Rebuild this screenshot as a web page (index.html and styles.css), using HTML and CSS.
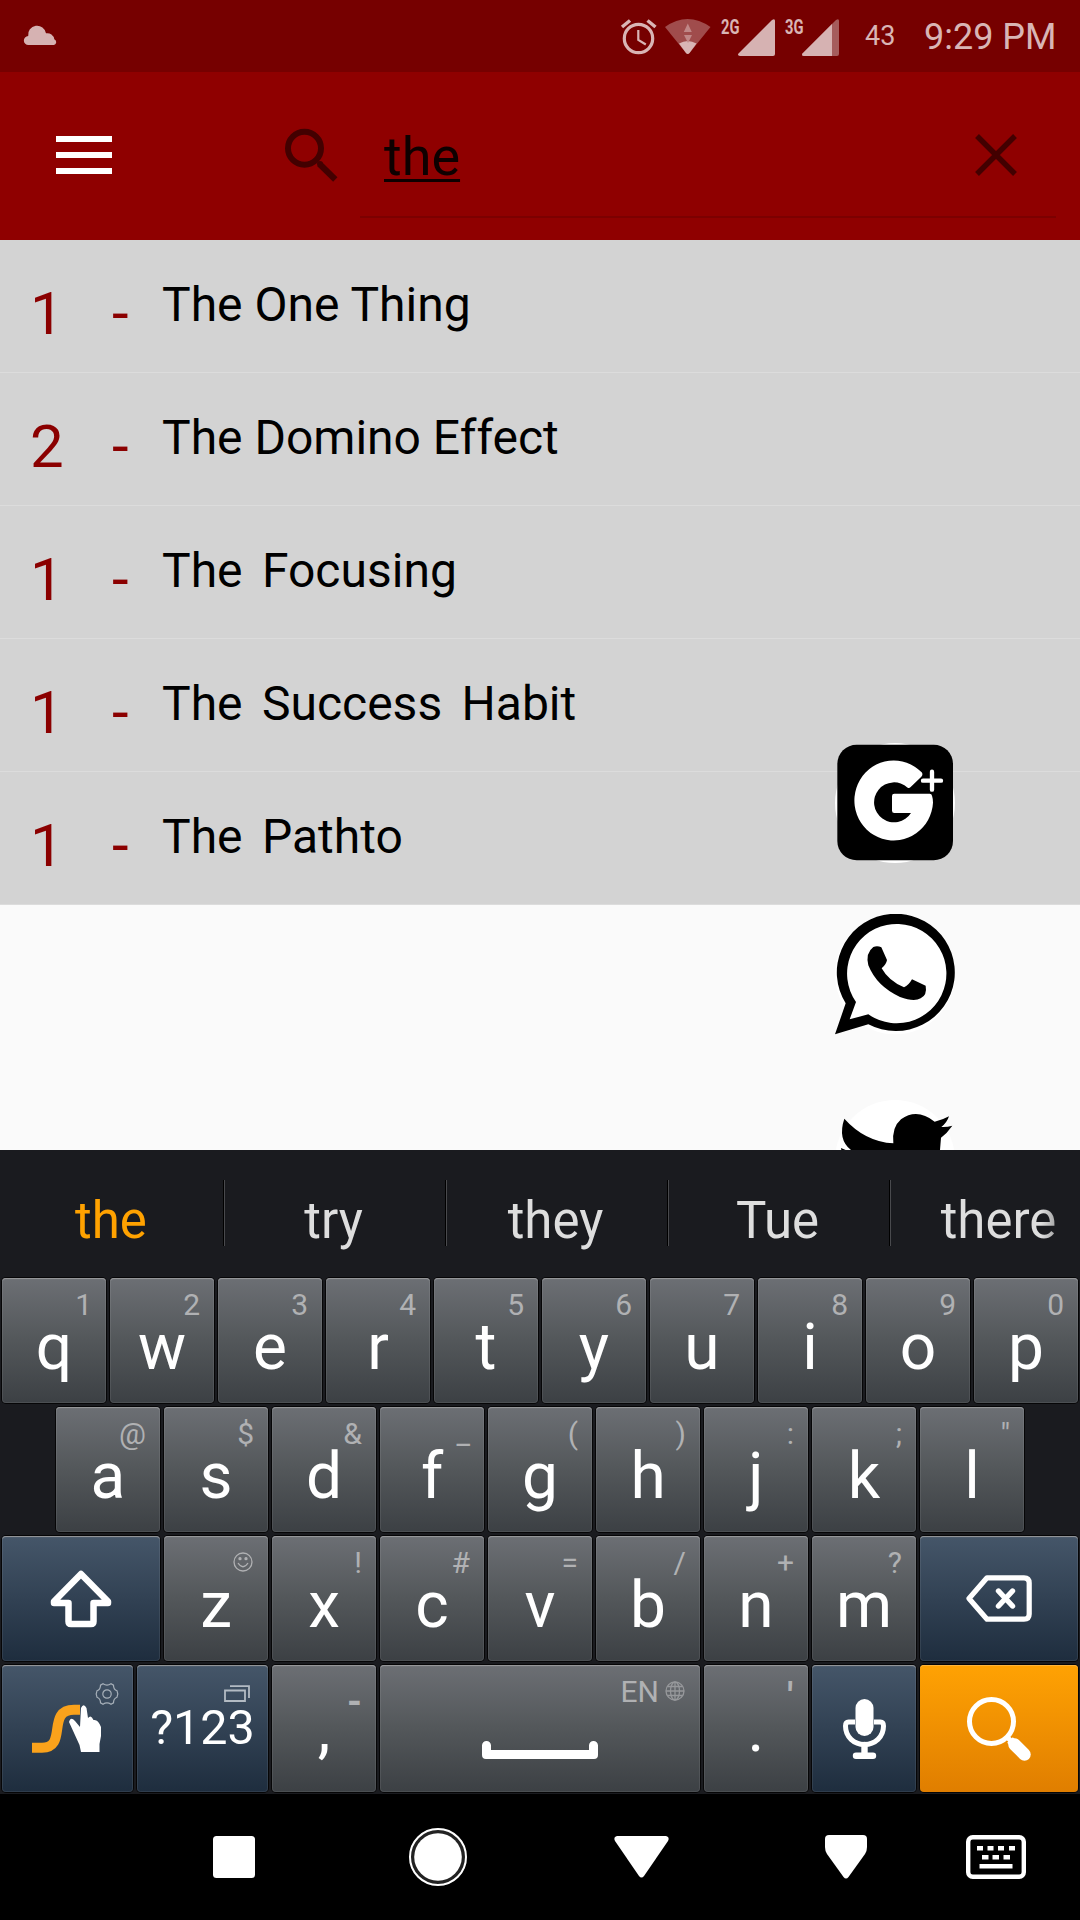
FILE: index.html
```html
<!DOCTYPE html>
<html lang="en">
<head>
<meta charset="utf-8">
<title>Search</title>
<link rel="stylesheet" href="styles.css">
</head>
<body>
<div class="screen">
  <header class="status">
    <svg class="cloud" width="33" height="20" viewBox="24 26 33 20"><path d="M28.500 45a4.500 4.500 0 0 1-.3-9A9 9 0 0 1 46 33.300a7 7 0 0 1 8.300 6A3 3 0 0 1 54 45z" fill="#d6b2b2"/></svg>
    <div class="status-right">
      <svg class="alarm" width="36" height="36" viewBox="621 19 36 36" fill="none" stroke="#d9b5b5"><circle cx="638.500" cy="38.500" r="14.200" stroke-width="3.200"/><path d="M638.300 30v10l7.500 4.500" stroke-width="2.200"/><path d="M622 27l8-6.500M655.500 27l-8-6.500" stroke-width="3.500"/></svg>
      <svg class="wifi" width="46" height="36" viewBox="665 19 46 36"><path d="M665 27Q687.500 11 710.500 27L689.500 53Q687.700 55 686 53z" fill="#a04c4c"/><path d="M679 43.500Q687.700 38.500 696.500 43.500L689.500 53Q687.700 55 686 53z" fill="#d9b5b5"/><path d="M687.800 23.500l4 8.500h-8zM684 35h8l-4 8z" fill="#c08787"/></svg>
      <svg class="sig1" width="55" height="38" viewBox="721 19 55 38"><text class="net" x="721" y="34" textLength="18.500" lengthAdjust="spacingAndGlyphs">2G</text><path d="M738.500 53.500L772 20q3-2 3 1V54q0 2-2 2H740q-3-.5-1.500-2.500z" fill="#d6b2b2"/></svg>
      <svg class="sig2" width="55" height="38" viewBox="785 19 55 38"><text class="net" x="785" y="34" textLength="18.500" lengthAdjust="spacingAndGlyphs">3G</text><path d="M802.500 53.500L836 20q3-2 3 1V54q0 2-2 2H804q-3-.5-1.500-2.500z" fill="#a55c5c"/><path d="M802.500 53.500L832 24V56H804q-3-.5-1.500-2.500z" fill="#d6b2b2"/></svg>
      <span class="battery">43</span>
      <span class="clock">9:29 PM</span>
    </div>
  </header>

  <div class="appbar">
    <svg class="menu" width="56" height="38" viewBox="0 0 56 38"><path d="M0 0h56v6H0zM0 16h56v6H0zM0 32h56v6H0z" fill="#fff"/></svg>
    <svg class="lens" width="53" height="53" viewBox="285 129 53 53" fill="none" stroke="#430000"><circle cx="304.500" cy="148.300" r="16.500" stroke-width="6"/><path d="M319.500 164L335.300 179.500" stroke-width="6.200"/><circle cx="320" cy="164" r="1.500" stroke-width="3"/></svg>
    <div class="field">
      <span class="query">the</span>
      <svg width="42" height="42" viewBox="0 0 42 42"><path d="M2 2l38 38M40 2L2 40" stroke="#430000" stroke-width="5.400"/></svg>
    </div>
  </div>

  <main class="content">
    <ul class="list">
      <li><span class="num">1</span><span class="dash">-</span><span class="title">The One Thing</span></li>
      <li><span class="num">2</span><span class="dash">-</span><span class="title">The Domino Effect</span></li>
      <li><span class="num">1</span><span class="dash">-</span><span class="title wide">The Focusing</span></li>
      <li><span class="num">1</span><span class="dash">-</span><span class="title wide">The Success Habit</span></li>
      <li><span class="num">1</span><span class="dash">-</span><span class="title wide">The Pathto</span></li>
    </ul>
    <div class="share">
      <svg width="120" height="120" viewBox="165 67 360 360"><circle cx="345" cy="247" r="180" fill="#fff"/><rect x="172" y="72" width="347" height="347" rx="58"/><path d="M425 155A118 120 0 1 0 459 246Q459 234 456 225Q455 219 449 219H343Q336 219 336 226V270Q336 277 343 277H393A60 60 0 1 1 383 201Q388 203 392 199L424 168Q430 161 425 155z" fill="#fff"/><path d="M429 180h54M456 153v54" stroke="#fff" stroke-width="13" stroke-linecap="round"/></svg>
      <svg class="wa" width="120" height="121" viewBox="165 581 360 363"><circle cx="345" cy="762" r="180" fill="#fff"/><path d="M197 849L165 942L265 912A177 176 0 1 0 197 849z"/><path d="M228 845L209 897L265 882A149 149 0 1 0 228 845z" fill="#fff"/><path d="M280 680Q292 675 304 681L321 719Q319 732 305 744Q326 782 372 801Q386 795 396 777L437 796Q442 824 422 834Q402 845 360 830Q290 798 265 735Q256 698 280 680z"/></svg>
      <svg class="tw" width="120" height="50" viewBox="165 1140 360 150"><circle cx="345" cy="1320" r="180" fill="#fff"/><path d="M193 1196Q255 1265 340 1270Q335 1222 363 1198Q411 1163 464 1205Q488 1200 507 1189Q501 1208 484 1221Q501 1222 517 1217Q501 1240 483 1253L480 1290H213Q172 1258 193 1196zM183 1284L197 1290H184z"/></svg>
    </div>
  </main>

  <section class="keyboard">
    <div class="suggest">
      <span class="on">the</span><span>try</span><span>they</span><span>Tue</span><span class="fade">there</span>
    </div>
    <div class="rows">
      <div class="row">
        <div class="key">q<i>1</i></div><div class="key">w<i>2</i></div><div class="key">e<i>3</i></div><div class="key">r<i>4</i></div><div class="key">t<i>5</i></div><div class="key">y<i>6</i></div><div class="key">u<i>7</i></div><div class="key">i<i>8</i></div><div class="key">o<i>9</i></div><div class="key">p<i>0</i></div>
      </div>
      <div class="row">
        <div class="key">a<i>@</i></div><div class="key">s<i>$</i></div><div class="key">d<i>&amp;</i></div><div class="key">f<i>_</i></div><div class="key">g<i>(</i></div><div class="key">h<i>)</i></div><div class="key">j<i>:</i></div><div class="key">k<i>;</i></div><div class="key">l<i>"</i></div>
      </div>
      <div class="row">
        <div class="key blue big"><svg width="62" height="58" viewBox="0 0 62 58"><path d="M31 4L58 31.500V33H43.500V51.500Q43.500 54 41 54H21Q18.500 54 18.500 51.500V33H4V31.500z" fill="none" stroke="#fff" stroke-width="6.500" stroke-linejoin="round"/></svg></div>
        <div class="key">z<svg class="mark smiley" width="20" height="20" viewBox="0 0 20 20" fill="none" stroke="#b0b1b3" stroke-width="1.300"><circle cx="10" cy="10" r="9"/><path d="M5 11q5 7.500 10 0"/><circle cx="7" cy="6.700" r="1" fill="#b0b1b3"/><circle cx="13" cy="6.700" r="1" fill="#b0b1b3"/></svg></div>
        <div class="key">x<i>!</i></div><div class="key">c<i>#</i></div><div class="key">v<i>=</i></div><div class="key">b<i>/</i></div><div class="key">n<i>+</i></div><div class="key">m<i>?</i></div>
        <div class="key blue big"><svg width="66" height="47" viewBox="0 0 66 47" fill="none" stroke="#fff"><path d="M21 2.800H58Q63.200 2.800 63.200 8V39Q63.200 44.200 58 44.200H21L3 23.500z" stroke-width="5.200" stroke-linejoin="round"/><path d="M32.500 16L46.500 31M46.500 16L32.500 31" stroke-width="5.400" stroke-linecap="round"/></svg></div>
      </div>
      <div class="row last">
        <div class="key blue mid"><svg class="swipe" width="70" height="50" viewBox="32 1703 70 50"><path d="M32 1746.700H42C68 1746.700 46 1708.800 74 1708.800H80" fill="none" stroke="#faa21b" stroke-width="10"/><path d="M81 1707Q83.500 1701.500 86.500 1707L88 1717Q91 1713 93.500 1719Q98 1718 101 1726V1735L99.500 1743V1751H81L79.500 1744L69 1721Q70.500 1715 75 1720L80 1726z" fill="#fff"/></svg>
          <svg class="mark gear" width="24" height="24" viewBox="0 0 24 24" fill="none" stroke="#a7b0b9" stroke-width="1.200"><circle cx="12" cy="12" r="4.200"/><path d="M8 1.800Q12 4.500 16 1.800L18.500 3.200Q18.500 7.500 22 8.800Q23.600 12 22 15.200Q18.500 16.500 18.500 20.800L16 22.200Q12 19.500 8 22.200L5.500 20.800Q5.500 16.500 2 15.200Q.4 12 2 8.800Q5.500 7.500 5.500 3.200z"/></svg></div>
        <div class="key blue mid sym">?123<svg class="mark boxes" width="26" height="17" viewBox="0 0 26 17" fill="none" stroke="#b3bbc3" stroke-width="1.800"><path d="M1 5.500h20v10.500H1zM6 1.200h19V13"/></svg></div>
        <div class="key punct">,<i class="bold hyphen">-</i></div>
        <div class="key space"><svg width="116" height="18" viewBox="0 0 116 18"><path d="M0 4.500a4.500 4.500 0 0 1 9 0V9h98V4.500a4.500 4.500 0 0 1 9 0V14q0 4-4 4H4q-4 0-4-4z" fill="#fff"/></svg><i>EN</i><svg class="mark globe" width="20" height="20" viewBox="0 0 20 20" fill="none" stroke="#96989b" stroke-width="1.300"><circle cx="10" cy="10" r="9"/><ellipse cx="10" cy="10" rx="4.500" ry="9"/><path d="M10 1v18M1 10h18M2.500 5.500h15M2.500 14.500h15"/></svg></div>
        <div class="key punct">.<i class="bold">'</i></div>
        <div class="key blue"><svg width="43" height="60" viewBox="0 0 43 60"><rect x="12.500" y="0" width="18" height="37" rx="9" fill="#fff"/><path d="M12 23H5.500Q2.500 23 2.500 27C2.500 38 11 45.500 21.500 45.500S40.500 38 40.500 27Q40.500 23 37.500 23H31" fill="none" stroke="#fff" stroke-width="5"/><path d="M21.500 46v10M13 56.800h17" stroke="#fff" stroke-width="6.400" stroke-linecap="round"/></svg></div>
        <div class="key go big"><svg width="65" height="64" viewBox="0 0 65 64" fill="none" stroke="#fff"><circle cx="24.500" cy="24.500" r="22" stroke-width="5"/><path d="M39 39l6 6" stroke-width="5"/><path d="M47.500 47.500L57.500 57.500" stroke-width="12.500" stroke-linecap="round"/><path d="M43 43l12 12" stroke-width="8"/></svg></div>
      </div>
    </div>
  </section>

  <nav class="nav">
    <svg width="42" height="42"><rect width="42" height="42" rx="3.500" fill="#fff"/></svg>
    <svg class="home" width="60" height="60" viewBox="-30 -30 60 60"><circle r="29" fill="#222"/><circle r="28" fill="none" stroke="#fff" stroke-width="2"/><circle r="23.800" fill="#fff"/></svg>
    <svg class="back" width="55" height="42" viewBox="0 0 55 42"><path d="M3 0H52Q56 1 54 5L30 40Q27.500 43 25 40L1 5Q-1 1 3 0z" fill="#fff"/></svg>
    <svg class="drop" width="42" height="44" viewBox="0 0 42 44"><path d="M4 0H38Q42 0 42 4V12Q42 16 40 19L23.500 42Q21 45 18.500 42L2 19Q0 16 0 12V4Q0 0 4 0z" fill="#fff"/></svg>
    <svg class="kb" width="60" height="44" viewBox="0 0 60 44"><rect x="2.200" y="2.200" width="55.600" height="39.600" rx="4.500" fill="none" stroke="#fff" stroke-width="4.400"/><path d="M11 11h6v4.500h-6zM21.500 11h6v4.500h-6zM32 11h6v4.500h-6zM43 11h6v4.500h-6zM16 20h6.500v4.500H16zM26.500 20H33v4.500h-6.500zM37.500 20H44v4.500h-6.500zM13.500 29h33v4.500h-33z" fill="#fff"/></svg>
  </nav>
</div>
</body>
</html>
```
FILE: styles.css
```css
* { box-sizing: border-box; }
body { margin: 0; font-family: Roboto, sans-serif; }
svg { display: block; flex: none; overflow: visible; }
.screen { width: 1080px; height: 1920px; display: flex; flex-direction: column; overflow: hidden; }

.status { height: 72px; background: #760000; display: flex; justify-content: space-between; padding: 0 0 0 24px; }
.cloud { margin-top: 26px; }
.status-right { display: flex; width: 459px; color: #d9b5b5; }
.alarm, .wifi, .sig1, .sig2 { margin-top: 19px; }
.wifi { margin-left: 8px; }
.sig1 { margin-left: 10px; }
.sig2 { margin-left: 9px; }
.net { font-weight: 700; font-size: 21px; fill: #d9b5b5; }
.battery { font-size: 27px; line-height: 72px; margin-left: 25px; width: 59px; }
.clock { font-size: 36px; line-height: 75px; white-space: nowrap; }

.appbar { height: 168px; background: #8f0000; display: flex; }
.menu { margin: 64px 0 0 56px; }
.lens { margin: 57px 0 0 173px; }
.field { margin-left: 22px; width: 696px; height: 146px; border-bottom: 2px solid #7c0000; padding: 0 39px 0 24px; display: flex; align-items: flex-start; justify-content: space-between; }
.field svg { margin-top: 62px; }
.query { font-size: 54px; line-height: 64px; margin-top: 53px; color: #0e0000; text-decoration: underline; text-decoration-thickness: 2.5px; text-underline-offset: 4px; text-decoration-skip-ink: none; }

.content { height: 910px; background: #fafafa; position: relative; }
.list { list-style: none; margin: 0; padding: 0; }
.list li { display: flex; height: 133px; background: #d3d3d3; border-bottom: 1px solid #dcdcdc; padding-left: 30px; }
.num, .dash { font-size: 60px; line-height: 70px; margin-top: 39px; color: #8b0000; }
.num { width: 82px; }
.dash { width: 50px; }
.title { font-size: 48px; line-height: 56px; margin-top: 37px; color: #000; }
.wide { word-spacing: 7.5px; }
.share { position: absolute; left: 835px; top: 503px; }
.share svg { overflow: hidden; }
.wa { margin-top: 51px; }
.tw { margin-top: 65px; }

.keyboard { height: 644px; background: #1a1b1f; }
.suggest { height: 127px; display: flex; padding-top: 30px; overflow: hidden; }
.suggest span { width: 222px; flex: none; height: 66px; border-right: 1px solid #494a4d; box-shadow: inset -1px 0 #000; font-size: 51px; line-height: 81px; text-align: center; color: #dedede; white-space: nowrap; padding-right: 4px; }
.suggest span:first-child { width: 225px; padding-right: 2px; }
.suggest span.on { color: #ffa200; }
.suggest span.fade { padding-right: 7px; border: 0; box-shadow: none; background: linear-gradient(90deg, #dedede 150px, #999 168px); background-clip: text; -webkit-background-clip: text; color: transparent; height: 97px; }
.rows { display: flex; flex-direction: column; gap: 4px; padding-top: 1px; }
.row { display: flex; gap: 4px; justify-content: center; height: 125px; }
.row.last { height: 127px; }
.key { position: relative; width: 104px; border-radius: 4px; background: linear-gradient(#6c6f74, #54585b 48%, #3c4044); box-shadow: 0 0 0 1px #060607, inset 0 2px 1px -1px #98999c, inset 0 0 0 1px rgba(255,255,255,.08); color: #fff; font-size: 64px; line-height: 124px; padding-top: 8px; text-align: center; }
.blue { background: linear-gradient(#455669, #1e2d3e); }
.go { background: linear-gradient(#ffa203, #e07e00); }
.blue, .go, .space { display: flex; align-items: center; justify-content: center; padding: 0; }
.go { box-shadow: 0 0 0 1px #060607, inset 0 1px #ffb43a; }
.big { width: 158px; }
.mid { width: 131px; }
.space { width: 320px; }
.space > svg:first-child { margin-top: 43px; }
.key i { position: absolute; right: 14px; top: 0; font-style: normal; font-size: 30px; line-height: 53px; color: #b0b1b3; }
.key .bold { font-weight: 700; font-size: 36px; line-height: 65px; right: 15px; }
.key .hyphen { font-size: 38px; line-height: 75px; right: 14px; }
.key.space i { right: 41px; line-height: 54px; }
.punct { line-height: 113px; }
.sym { font-size: 48.500px; line-height: 125px; padding-bottom: 2px; }
.swipe { margin-right: 2px; }
.mark { position: absolute; }
.smiley { right: 15px; top: 16px; }
.gear { right: 14px; top: 17px; }
.boxes { right: 18px; top: 20px; }
.globe { right: 15px; top: 16px; }

.nav { height: 126px; background: #000; display: flex; align-items: center; padding-left: 213px; }
.home { margin-left: 152.500px; }
.back { margin-left: 146.500px; }
.drop { margin-left: 156px; }
.kb { margin-left: 99px; }
```
